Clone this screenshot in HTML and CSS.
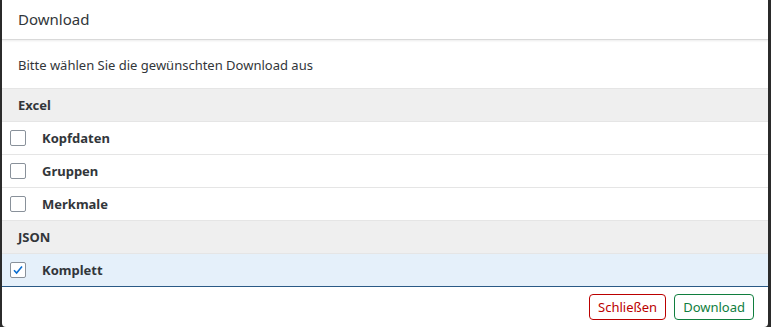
FILE: index.html
```html
<!DOCTYPE html>
<html lang="de">
<head>
  <meta charset="UTF-8" />
  <title>Download</title>
  <link rel="stylesheet" href="styles.css">
</head>
<body>
  <div class="dialog">
    <!-- Kopf -->
    <div class="dialog-header">Download</div>

    <!-- Inhalt -->
    <div class="dialog-content">
      <div class="intro">Bitte wählen Sie die gewünschten Download aus</div>

      <div class="group">Excel</div>
      <label class="item">
        <span class="check"></span>
        <span>Kopfdaten</span>
      </label>
      <label class="item">
        <span class="check"></span>
        <span>Gruppen</span>
      </label>
      <label class="item">
        <span class="check"></span>
        <span>Merkmale</span>
      </label>

      <div class="group">JSON</div>
      <label class="item selected">
        <span class="check">
          <svg width="12" height="12" viewBox="0 0 12 12"><path d="M2 6.3l2.6 2.7L10 2.6" fill="none" stroke="#0a6ed1" stroke-width="1.6"/></svg>
        </span>
        <span>Komplett</span>
      </label>
    </div>

    <!-- Fuss -->
    <div class="dialog-footer">
      <button class="btn reject">Schließen</button>
      <button class="btn accept">Download</button>
    </div>
  </div>
</body>
</html>
```

FILE: styles.css
```css
html, body {
  height: 100%;
}

body {
  margin: 0;
  background: #2b2b2b;
  font-family: "Noto Sans", "Open Sans", sans-serif;
  color: #32363a;
  display: flex;
}

.dialog {
  flex: 1;
  margin: 0 3px 0 2px;
  background: #fff;
  border-radius: 0 0 4px 4px;
  display: flex;
  flex-direction: column;
}

/* Kopf */
.dialog-header {
  height: 39px;
  line-height: 38px;
  padding: 0 16px;
  font-size: 15px;
  border-bottom: 1px solid #d9d9d9;
  box-shadow: 0 1px 2px rgba(0, 0, 0, 0.08);
  position: relative;
}

/* Inhalt */
.dialog-content {
  display: flex;
  flex-direction: column;
}

.intro {
  font-size: 13px;
  height: 48px;
  line-height: 50px;
  padding: 0 16px;
  border-bottom: 1px solid #e5e5e5;
}

.group {
  height: 32px;
  line-height: 32px;
  padding: 0 16px;
  background: #efefef;
  font-weight: bold;
  font-size: 13px;
  border-bottom: 1px solid #e5e5e5;
}

.item {
  height: 32px;
  display: flex;
  align-items: center;
  gap: 16px;
  padding-left: 8px;
  font-weight: bold;
  font-size: 13px;
  border-bottom: 1px solid #e5e5e5;
}

.item.selected {
  background: #e5f0fa;
  border-bottom: 1px solid #2a5a86;
}

.check {
  width: 14px;
  height: 14px;
  border: 1px solid #89919a;
  border-radius: 2px;
  background: #fff;
  display: flex;
  align-items: center;
  justify-content: center;
}

/* Fuss */
.dialog-footer {
  flex: 1;
  display: flex;
  justify-content: flex-end;
  align-items: center;
  gap: 8px;
  padding: 0 14px 0 0;
}

.btn {
  font-family: "Noto Sans", "Open Sans", sans-serif;
  font-size: 13px;
  height: 26px;
  padding: 0 8px;
  background: #fff;
  border-radius: 4px;
  cursor: pointer;
}

.reject {
  color: #bb0000;
  border: 1px solid #bb0000;
}

.accept {
  color: #107e3e;
  border: 1px solid #107e3e;
}
```
